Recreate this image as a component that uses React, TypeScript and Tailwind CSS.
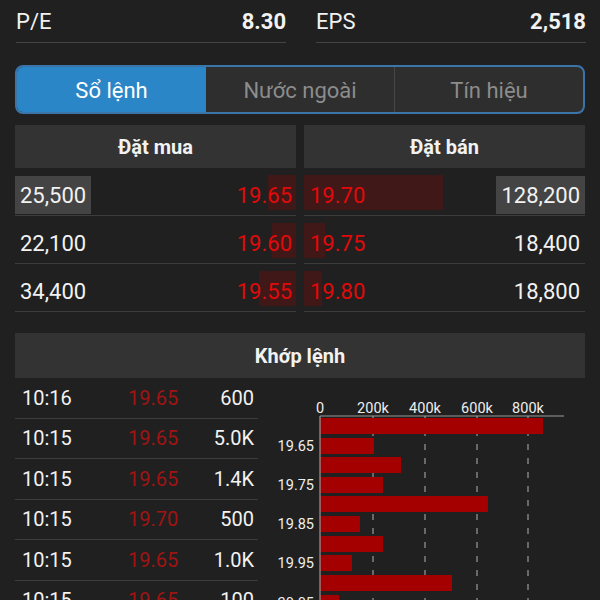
const bids = [
  { qty: "25,500", price: "19.65", depth: 28, hl: true },
  { qty: "22,100", price: "19.60", depth: 24, hl: false },
  { qty: "34,400", price: "19.55", depth: 37, hl: false },
];

const asks = [
  { qty: "128,200", price: "19.70", depth: 139, hl: true },
  { qty: "18,400", price: "19.75", depth: 21, hl: false },
  { qty: "18,800", price: "19.80", depth: 18, hl: false },
];

const trades = [
  { time: "10:16", price: "19.65", vol: "600" },
  { time: "10:15", price: "19.65", vol: "5.0K" },
  { time: "10:15", price: "19.65", vol: "1.4K" },
  { time: "10:15", price: "19.70", vol: "500" },
  { time: "10:15", price: "19.65", vol: "1.0K" },
  { time: "10:15", price: "19.65", vol: "100" },
];

// bar widths in px (0.26px per 1k)
const bars = [223, 54, 81, 63, 168, 40, 63, 32, 132, 19];
const barY = [38, 58, 77, 97, 116, 136, 156, 175, 195, 215];
const yLabels = [
  { y: 66, t: "19.65" },
  { y: 105, t: "19.75" },
  { y: 144, t: "19.85" },
  { y: 183, t: "19.95" },
  { y: 223, t: "20.05" },
];
const ticks = [
  { x: 58, t: "0" },
  { x: 111, t: "200k" },
  { x: 163, t: "400k" },
  { x: 215, t: "600k" },
  { x: 266, t: "800k" },
];

function VolumeChart() {
  return (
    <svg width="338" height="222" viewBox="0 0 338 222" className="block shrink-0">
      {ticks.slice(1).map((t) => (
        <line key={t.x} x1={t.x} y1={36} x2={t.x} y2={222} stroke="#9a9a9a" strokeWidth="1.2" strokeDasharray="6 8" />
      ))}
      {bars.map((w, i) => (
        <rect key={i} x={58} y={barY[i]} width={w} height={16} fill="#a50000" />
      ))}
      <line x1={58} y1={36} x2={58} y2={222} stroke="#9a9a9a" strokeWidth="1.2" />
      <line x1={58} y1={36} x2={302} y2={36} stroke="#9a9a9a" strokeWidth="1.2" />
      {ticks.map((t) => (
        <text key={t.t} x={t.x} y={33} fill="#eeeeee" fontSize="14.5" textAnchor="middle" fontFamily="Roboto, sans-serif">
          {t.t}
        </text>
      ))}
      {yLabels.map((l) => (
        <text key={l.t} x={52} y={l.y + 5} fill="#eeeeee" fontSize="14.5" textAnchor="end" fontFamily="Roboto, sans-serif">
          {l.t}
        </text>
      ))}
    </svg>
  );
}

export default function App() {
  return (
    <div className="w-[600px] h-[600px] overflow-hidden bg-[#202020] text-[#f2f2f2] font-['Roboto',sans-serif]">
      {/* Stats */}
      <div className="flex gap-[30px] pl-[16px] pr-[14px]">
        <div className="flex-1 flex items-center justify-between h-[43px] border-b border-[#444]">
          <span className="text-[22px]">P/E</span>
          <span className="text-[22px] font-bold">8.30</span>
        </div>
        <div className="flex-1 flex items-center justify-between h-[43px] border-b border-[#444]">
          <span className="text-[22px]">EPS</span>
          <span className="text-[22px] font-bold">2,518</span>
        </div>
      </div>

      {/* Tabs */}
      <div className="mx-[15px] mt-[22px] h-[49px] flex rounded-[8px] border-2 border-[#3b74a8] overflow-hidden bg-[#2e2e2e] text-[22px]">
        <div className="w-[189px] flex items-center justify-center bg-[#2b86c8] text-white pt-[2px]">Sổ lệnh</div>
        <div className="flex-1 flex items-center justify-center text-[#8c8c8c] border-r border-[#464646] pt-[2px]">Nước ngoài</div>
        <div className="flex-1 flex items-center justify-center text-[#8c8c8c] pt-[2px]">Tín hiệu</div>
      </div>

      {/* Order book */}
      <div className="flex gap-[8px] mx-[15px] mt-[11px]">
        <div className="flex-1">
          <div className="h-[43px] bg-[#333333] flex items-center justify-center text-[20px] font-bold">Đặt mua</div>
          {bids.map((b) => (
            <div key={b.price} className="relative h-[48px] pt-[7px] border-b border-[#3c3c3c] flex items-center justify-between">
              <div className="absolute right-0 top-[7px] bottom-[5px] bg-[#a00000]/25" style={{ width: b.depth }} />
              <span className={`relative text-[22px] px-[5px] h-[38px] flex items-center ${b.hl ? "bg-[#444444]" : ""}`}>{b.qty}</span>
              <span className="relative text-[22px] pr-[4px] text-[#e00a0a]">{b.price}</span>
            </div>
          ))}
        </div>
        <div className="flex-1">
          <div className="h-[43px] bg-[#333333] flex items-center justify-center text-[20px] font-bold">Đặt bán</div>
          {asks.map((a) => (
            <div key={a.price} className="relative h-[48px] pt-[7px] border-b border-[#3c3c3c] flex items-center justify-between">
              <div className="absolute left-0 top-[7px] bottom-[5px] bg-[#a00000]/25" style={{ width: a.depth }} />
              <span className="relative text-[22px] pl-[6px] text-[#e00a0a]">{a.price}</span>
              <span className={`relative text-[22px] px-[5px] h-[38px] flex items-center ${a.hl ? "bg-[#444444]" : ""}`}>{a.qty}</span>
            </div>
          ))}
        </div>
      </div>

      {/* Matched orders */}
      <div className="mx-[15px] mt-[21px] h-[45px] bg-[#333333] flex items-center justify-center text-[20px] font-bold">
        Khớp lệnh
      </div>
      <div className="flex">
        <div className="ml-[15px] w-[243px] shrink-0">
          {trades.map((t, i) => (
            <div key={i} className="h-[40.5px] border-b border-[#3c3c3c] grid grid-cols-[113px_auto_1fr] items-center text-[20px]">
              <span className="pl-[7px]">{t.time}</span>
              <span className="text-[#a01414]">{t.price}</span>
              <span className="text-right pr-[4px]">{t.vol}</span>
            </div>
          ))}
        </div>
        <div className="ml-[4px] mt-[2px]">
          <VolumeChart />
        </div>
      </div>
    </div>
  );
}
